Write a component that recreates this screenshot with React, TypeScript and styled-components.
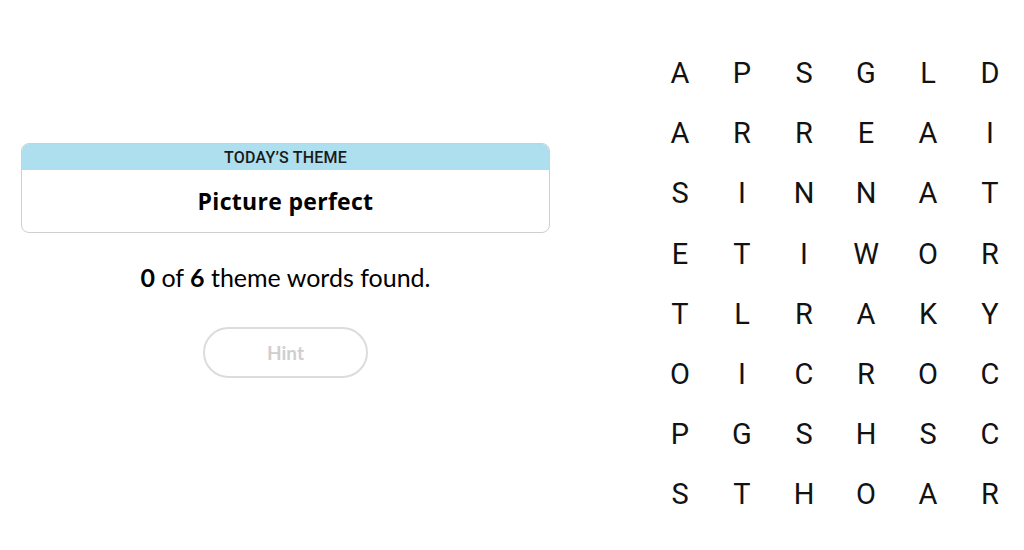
import React from "react";
import styled, { createGlobalStyle } from "styled-components";

const GlobalStyle = createGlobalStyle`
  html, body { margin: 0; padding: 0; background: #ffffff; }
  body { font-family: "Liberation Sans", Arial, sans-serif; color: #000; }
`;

const Page = styled.div`
  display: flex;
  width: 1024px;
  height: 550px;
  overflow: hidden;
`;

const LeftPanel = styled.div`
  width: 529px;
  margin-left: 21px;
  padding-top: 143px;
  display: flex;
  flex-direction: column;
  align-items: center;
`;

const ThemeCard = styled.div`
  width: 100%;
  box-sizing: border-box;
  border: 1px solid #cfcfcf;
  border-radius: 8px;
  overflow: hidden;
`;

const ThemeHeader = styled.div`
  background: #aedfee;
  height: 26px;
  display: flex;
  align-items: center;
  justify-content: center;
  font-family: Roboto, "Liberation Sans", sans-serif;
  font-weight: 500;
  font-size: 16px;
  letter-spacing: 0.2px;
  color: #1a1a1a;
`;

const ThemeTitle = styled.div`
  height: 62px;
  display: flex;
  align-items: center;
  justify-content: center;
  font-family: "Open Sans", "Liberation Sans", sans-serif;
  font-weight: 700;
  font-size: 23px;
  letter-spacing: 0.3px;
  color: #000;
`;

const Progress = styled.p`
  margin: 29px 0 0;
  font-family: Lato, "Open Sans", sans-serif;
  font-size: 25px;
  line-height: 30px;
  color: #000;
  b { font-weight: 700; }
`;

const HintButton = styled.button`
  margin-top: 35px;
  width: 165px;
  height: 51px;
  border: 2px solid #dcdcdc;
  border-radius: 26px;
  background: #fff;
  font-family: Lato, "Open Sans", sans-serif;
  font-weight: 700;
  font-size: 19px;
  color: #cfcfcf;
  cursor: default;
`;

const Board = styled.div`
  margin-left: 99px;
  margin-top: 43px;
  display: grid;
  grid-template-columns: repeat(6, 62px);
  grid-auto-rows: 60.2px;
  align-self: flex-start;
`;

const Cell = styled.div`
  display: flex;
  align-items: center;
  justify-content: center;
  font-family: Roboto, "Liberation Sans", sans-serif;
  font-size: 29px;
  color: #121212;
`;

const letters = [
  "APSGLD",
  "ARREAI",
  "SINNAT",
  "ETIWOR",
  "TLRAKY",
  "OICROC",
  "PGSHSC",
  "STHOAR",
];

export default function App() {
  return (
    <Page>
      <GlobalStyle />
      <LeftPanel>
        <ThemeCard>
          <ThemeHeader>TODAY’S THEME</ThemeHeader>
          <ThemeTitle>Picture perfect</ThemeTitle>
        </ThemeCard>
        <Progress>
          <b>0</b> of <b>6</b> theme words found.
        </Progress>
        <HintButton>Hint</HintButton>
      </LeftPanel>
      <Board>
        {letters.flatMap((row, r) =>
          row.split("").map((ch, c) => <Cell key={`${r}-${c}`}>{ch}</Cell>)
        )}
      </Board>
    </Page>
  );
}
